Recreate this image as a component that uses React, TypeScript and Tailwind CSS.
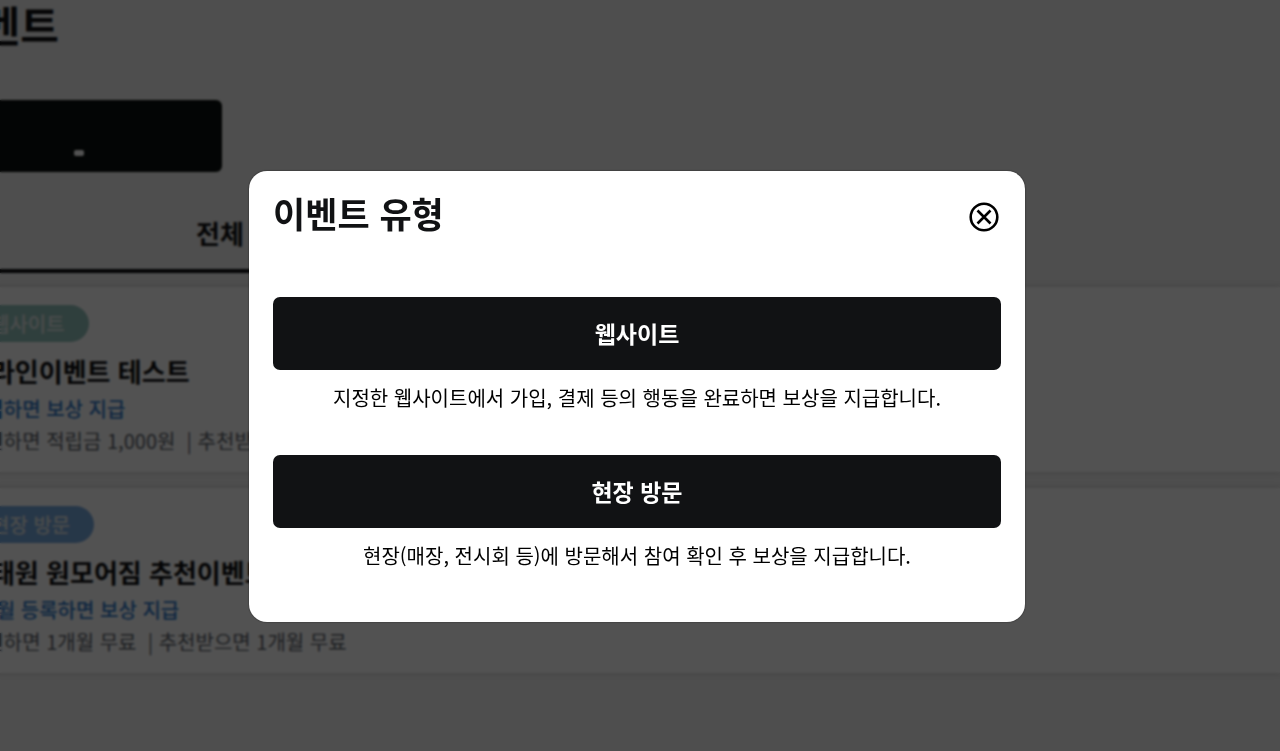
import { clsx } from 'clsx'

type EventItem = {
  type: string
  badge: string
  title: string
  condition: string
  reward: string
}

const events: EventItem[] = [
  {
    type: '웹사이트',
    badge: 'bg-[#94c4be]',
    title: '온라인이벤트 테스트',
    condition: '가입하면 보상 지급',
    reward: '추천하면 적립금 1,000원  | 추천받으면 적립금 1,000원',
  },
  {
    type: '현장 방문',
    badge: 'bg-[#78aae0]',
    title: '이태원 원모어짐 추천이벤트',
    condition: '1개월 등록하면 보상 지급',
    reward: '추천하면 1개월 무료  | 추천받으면 1개월 무료',
  },
]

const eventTypes = [
  { name: '웹사이트', description: '지정한 웹사이트에서 가입, 결제 등의 행동을 완료하면 보상을 지급합니다.' },
  { name: '현장 방문', description: '현장(매장, 전시회 등)에 방문해서 참여 확인 후 보상을 지급합니다.' },
]

const EventCard = ({ type, badge, title, condition, reward }: EventItem) => (
  <li className="bg-white px-6 pt-[18px] pb-[15px] whitespace-pre shadow-[0_0_6px_rgba(0,0,0,0.16)]">
    <span className={clsx('block w-fit rounded-full px-6 text-xl leading-[37px] font-medium text-[#e4eaea]', badge)}>{type}</span>
    <h2 className="mt-[11px] text-[26px] leading-[36px] font-bold text-[#111214]">{title}</h2>
    <p className="mt-1 text-xl leading-[32px] font-medium text-[#2f78c8]">{condition}</p>
    <p className="text-xl leading-[32px] text-[#5e646c]">{reward}</p>
  </li>
)

const EventPage = () => (
  <main className="-ml-[57px] h-screen overflow-hidden bg-[#f1f1f1]">
    <h1 className="text-[42px] leading-[48px] font-bold text-[#111214]">이벤트</h1>

    <button className="mt-[52px] flex h-[72px] w-[279px] items-end justify-center rounded-md bg-[#0c1210] pb-4" aria-label="이벤트 추가">
      <span className="mr-2 h-[6px] w-[10px] rounded-xs bg-white" />
    </button>

    <nav className="mt-[38px] flex">
      <button className="w-[554px] border-b-4 border-[#111214] pb-[13px] text-[26px] leading-[46px] font-bold text-[#111214]">전체</button>
    </nav>

    <ul className="mt-[14px] flex flex-col gap-4">
      {events.map((event) => (
        <EventCard key={event.title} {...event} />
      ))}
    </ul>
  </main>
)

const CloseIcon = () => (
  <svg viewBox="0 0 30 30" className="size-[30px]" fill="none" stroke="currentColor" aria-hidden="true">
    <circle cx="15" cy="15" r="13.3" strokeWidth="2.6" />
    <path d="M8.5 8.5 21.5 21.5M21.5 8.5 8.5 21.5" strokeWidth="2.6" />
  </svg>
)

const EventTypeModal = () => (
  <div className="fixed inset-0 flex items-center justify-center bg-black/68 pt-[42px] pr-[6px] backdrop-blur-[1px]">
    <section role="dialog" aria-modal="true" aria-labelledby="modal-title" className="w-full max-w-[776px] rounded-[18px] bg-white px-6 pt-5 pb-[51px] shadow-[0_0_2px_rgba(0,0,0,0.6)]">
      <header className="flex items-center justify-between">
        <h2 id="modal-title" className="pb-2 text-[35px] leading-[44px] font-bold text-[#111214]">
          이벤트 유형
        </h2>
        <button aria-label="닫기" className="mr-[2px] text-black">
          <CloseIcon />
        </button>
      </header>

      <div className="mt-[54px] flex flex-col gap-[42px]">
        {eventTypes.map(({ name, description }) => (
          <div key={name} className="flex flex-col gap-3">
            <button className="h-[73px] rounded-[7px] bg-[#111214] text-[23px] font-bold text-white">{name}</button>
            <p className="text-center text-xl leading-[31px] text-black">{description}</p>
          </div>
        ))}
      </div>
    </section>
  </div>
)

const App = () => {
  return (
    <div lang="ko" className="font-['Noto_Sans_CJK_KR',sans-serif]">
      <EventPage />
      <EventTypeModal />
    </div>
  )
}

export default App
